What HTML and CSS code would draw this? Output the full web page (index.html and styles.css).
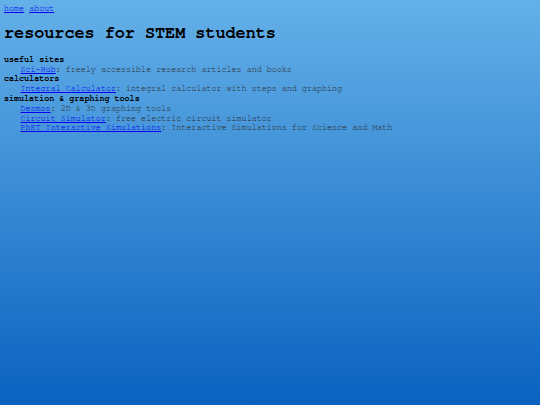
FILE: index.html
```html
<!DOCTYPE html>
<html>
<head>
<meta charset="utf-8">
<link rel="stylesheet" href="styles.css">
<title>resources for STEM students</title>
</head>
<body>
<nav class="nav"><a href="#">home</a> <a href="#">about</a></nav>
<h1 class="title">resources for STEM students</h1>
<dl class="list">
  <dt>useful sites</dt>
  <dd><a href="#">Sci-Hub</a>: freely accessible research articles and books</dd>
  <dt>calculators</dt>
  <dd><a href="#">Integral Calculator</a>: integral calculator with steps and graphing</dd>
  <dt>simulation &amp; graphing tools</dt>
  <dd><a href="#">Desmos</a>: 2D &amp; 3D graphing tools</dd>
  <dd><a href="#">Circuit Simulator</a>: free electric circuit simulator</dd>
  <dd><a href="#">PhET Interactive Simulations</a>: Interactive Simulations for Science and Math</dd>
</dl>
</body>
</html>
```
FILE: styles.css
```css
html {
  min-height: 100%;
  background: linear-gradient(to bottom, #64b0e8 0%, #0a62c0 100%);
}
body {
  margin: 0;
  padding: 4px 4px 0;
  min-height: 400px;
  box-sizing: border-box;
  font-family: "Nimbus Mono PS", "FreeMono", "Courier", "Liberation Mono", monospace;
  font-size: 8.4px;
  line-height: 9.8px;
  color: #2a2a2a;
}
a {
  color: #0000ee;
}
.nav {
  display: block;
}
.title {
  font-size: 16.8px;
  line-height: 20px;
  margin: 9px 0 12px;
  color: #000;
}
.list {
  margin: 0;
}
.list dt {
  font-weight: bold;
  color: #000;
}
.list dd {
  margin: 0 0 0 16.5px;
}
```
